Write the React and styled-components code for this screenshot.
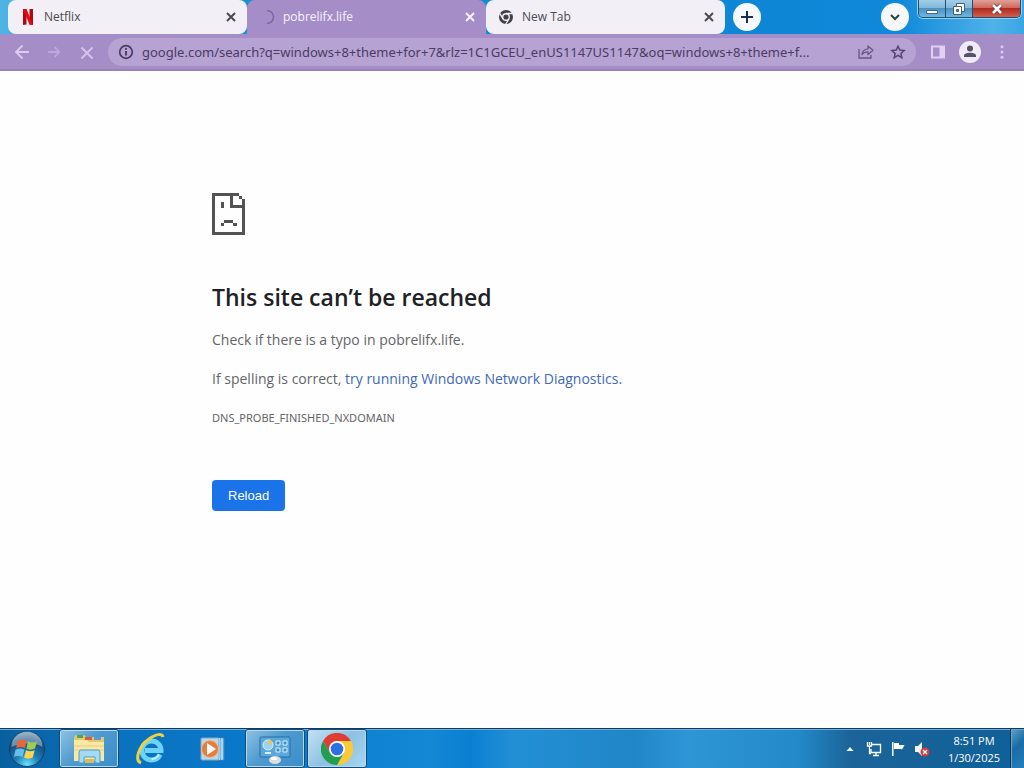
import React from "react";
import styled, { createGlobalStyle } from "styled-components";

const GlobalStyle = createGlobalStyle`
  * { box-sizing: border-box; }
  body { margin: 0; background: #fefefe; font-family: "Open Sans", "Noto Sans", sans-serif; }
  button { font-family: inherit; border: 0; padding: 0; background: none; cursor: pointer; }
  svg { display: block; flex: none; }
`;

const Desktop = styled.div`
  display: flex;
  flex-direction: column;
  min-height: 100vh;
`;

const TabStrip = styled.header`
  display: flex;
  align-items: flex-start;
  height: 34px;
  padding-left: 8px;
  background: linear-gradient(90deg, #4db4e4 0, #1690cf 25%, #0d86d6 75%, #1189da 88%, #4fb3ea 97%, #3ba5e2 100%);
`;

const Tab = styled.div`
  display: flex;
  align-items: center;
  flex: 0 1 239px;
  min-width: 0;
  height: 34px;
  padding: 0 8px 0 12px;
  border-radius: ${(p) => (p.$active ? "8px 8px 0 0" : "8px")};
  background: ${(p) => (p.$active ? "#a58dc7" : "#f2f0f6")};
  color: ${(p) => (p.$active ? "#f8f2ff" : "#4b4a52")};
`;

const TabTitle = styled.span`
  flex: 1;
  min-width: 0;
  margin-left: 8px;
  overflow: hidden;
  white-space: nowrap;
  font-size: 12px;
  line-height: 16px;
`;

const IconButton = styled.button`
  display: grid;
  place-items: center;
  flex: none;
  width: ${(p) => p.$size || 16}px;
  height: ${(p) => p.$size || 16}px;
  border-radius: 50%;
  color: ${(p) => p.$color || "inherit"};
  background: ${(p) => p.$fill || "transparent"};
`;

const StripActions = styled.div`
  display: flex;
  flex: 1;
  justify-content: space-between;
  padding: 3px 9px 0 8px;
`;

const WindowControls = styled.div`
  display: flex;
  flex: none;
  height: 18px;
  margin-right: 3px;
  border: 1px solid #24506f;
  border-top: 0;
  border-radius: 0 0 5px 5px;
  overflow: hidden;
  box-shadow: 0 0 0 1px #8fd0f3;
`;

const WindowButton = styled.button`
  display: grid;
  place-items: center;
  width: ${(p) => (p.$close ? 47 : 27)}px;
  border-right: ${(p) => (p.$close ? "0" : "1px solid #24506f")};
  background: ${(p) =>
    p.$close
      ? "linear-gradient(#e0a098 0, #cf6a5c 45%, #b02b20 50%, #d2604c 100%)"
      : "linear-gradient(#a4cde6 0, #83b9dc 45%, #4b92c1 50%, #6db8e2 100%)"};
`;

const Toolbar = styled.nav`
  display: flex;
  align-items: center;
  height: 37px;
  padding: 0 12px;
  background: #a58dc7;
  border-bottom: 2px solid #9a82b8;
`;

const NavGroup = styled.div`
  display: flex;
  gap: 12px;
  padding-right: 12px;
`;

const AddressBar = styled.div`
  display: flex;
  align-items: center;
  flex: 1;
  min-width: 0;
  height: 28px;
  padding: 0 8px;
  border-radius: 14px;
  background: #b7a2d4;
  color: #4a3c62;
`;

const AddressInput = styled.input`
  flex: 1;
  min-width: 0;
  margin: 0 8px 0 6px;
  padding: 0;
  border: 0;
  outline: 0;
  background: none;
  color: #4a3c62;
  font: 13px/20px "Noto Sans", "Open Sans", sans-serif;
  text-overflow: ellipsis;
`;

const AddressActions = styled.div`
  display: flex;
  gap: 12px;
`;

const ToolbarActions = styled.div`
  display: flex;
  align-items: center;
  gap: 11px;
  padding-left: 12px;
`;

const Page = styled.main`
  flex: 1;
  padding: 122px 24px 40px;
`;

const ErrorPanel = styled.section`
  max-width: 600px;
  margin: 0 auto;
  color: #646569;
  font-size: 14px;
  line-height: 20px;
`;

const ErrorTitle = styled.h1`
  margin: 46px 0 17px;
  color: #202124;
  font-size: 23px;
  font-weight: 600;
  line-height: 32px;
`;

const ErrorText = styled.p`
  margin: 0 0 19px;
`;

const ErrorLink = styled.a`
  color: #4269b4;
  text-decoration: none;
`;

const ErrorCode = styled.p`
  margin: 0 0 52px;
  font-family: "Noto Sans", "Open Sans", sans-serif;
  font-size: 11px;
`;

const ReloadButton = styled.button`
  display: block;
  height: 31px;
  padding: 0 16px;
  border-radius: 4px;
  background: #1a73e8;
  color: #fff;
  font-family: "Liberation Sans", sans-serif;
  font-size: 13px;
  font-weight: 500;
`;

const Taskbar = styled.footer`
  display: flex;
  align-items: stretch;
  height: 40px;
  border-top: 1px solid #123a5c;
  box-shadow: inset 0 1px 0 #71b0dd;
  background: linear-gradient(90deg, #09609f 0, #0a72be 12%, #0a7cd0 30%, #1488d4 42%, #0a7fd2 46%, #228fd4 50%, #2186c8 62%, #2f96d6 67%, #2389c8 78%, #1b6499 83%, #0f6099 100%);
`;

const StartButton = styled.button`
  display: grid;
  place-items: center;
  width: 54px;
`;

const TaskList = styled.div`
  display: flex;
  flex: 1;
  gap: 2px;
  padding-left: 5px;
`;

const taskFill = {
  open: "linear-gradient(135deg, #8fc2e3, #4f9acf 45%, #3a8dca)",
  front: "linear-gradient(135deg, #c4e1f1, #8dc1e2 50%, #a5d6f1)",
  none: "none",
};

const TaskButton = styled.button`
  display: grid;
  place-items: center;
  width: 60px;
  border: 1px solid ${(p) => (p.$state === "none" ? "transparent" : "#154b79")};
  border-radius: 3px;
  background: ${(p) => taskFill[p.$state]};
  box-shadow: ${(p) => (p.$state === "none" ? "none" : "inset 0 0 0 1px #b4daf0")};
`;

const Tray = styled.div`
  display: flex;
  align-items: center;
  gap: 8px;
`;

const Clock = styled.time`
  width: 72px;
  color: #fff;
  font-size: 11px;
  line-height: 17px;
  text-align: center;
`;

const ShowDesktop = styled.button`
  width: 14px;
  border-left: 1px solid #0d3656;
  background: linear-gradient(135deg, #5fa3cc, #1b6aa5 45%, #2480bd);
  box-shadow: inset 1px 1px 0 #6aa3c6;
`;

const Cross = ({ size = 16, width = 2 }) => (
  <svg width={size} height={size} viewBox="0 0 16 16" stroke="currentColor" strokeWidth={width}>
    <path d="M4 4l8 8M12 4l-8 8" />
  </svg>
);

const NetflixIcon = () => (
  <svg width="16" height="16" viewBox="0 0 16 16">
    <path fill="#b20710" d="M3 0h3.5v15.5L3 16zM9.500 0H13v16l-3.500-.5z" />
    <path fill="#e50914" d="M3 0h3.500L13 16l-3.500-.5z" />
  </svg>
);

const Spinner = () => (
  <svg width="16" height="16" viewBox="0 0 16 16" fill="none" stroke="#7f68a8" strokeWidth="1.600">
    <path d="M8 1.500a6.500 6.500 0 0 1 0 13" />
  </svg>
);

const ChromeGlyph = () => (
  <svg width="16" height="16" viewBox="0 0 16 16">
    <circle cx="8" cy="8" r="7" fill="#414046" />
    <circle cx="8" cy="8" r="3.300" fill="#414046" stroke="#f2f0f6" strokeWidth="1.400" />
    <path d="M8 4.500h6.300M5 9.800L1.800 4.400M11 9.800L7.800 15" stroke="#f2f0f6" strokeWidth="1.300" />
  </svg>
);

const BackIcon = () => (
  <svg width="20" height="20" viewBox="0 0 20 20" fill="none" stroke="#dccbf0" strokeWidth="1.800">
    <path d="M17 10H4M10.500 3.500L4 10l6.500 6.500" />
  </svg>
);

const ForwardIcon = () => (
  <svg width="20" height="20" viewBox="0 0 20 20" fill="none" stroke="#bda8dc" strokeWidth="1.800">
    <path d="M4 10h11M10.500 5l5 5-5 5" />
  </svg>
);

const InfoIcon = () => (
  <svg width="20" height="20" viewBox="0 0 20 20" fill="none" stroke="currentColor" strokeWidth="1.700">
    <circle cx="10" cy="10" r="6.300" />
    <path d="M10 9v4.500M10 6v1.700" strokeWidth="1.900" />
  </svg>
);

const ShareIcon = () => (
  <svg width="20" height="20" viewBox="0 0 20 20" fill="none" stroke="#695681" strokeWidth="1.300">
    <path d="M3 7v9h12v-3" />
    <path d="M12 4l5 4.300-5 4.300v-2.800c-2.700 0-4.600.7-6 2.700.4-3.300 2.400-5.300 6-5.700z" strokeLinejoin="round" />
  </svg>
);

const StarIcon = () => (
  <svg width="20" height="20" viewBox="0 0 20 20" fill="none" stroke="#574570" strokeWidth="1.500">
    <path d="M10 4.200l1.800 3.900 4.300.4-3.200 2.900.9 4.200-3.800-2.300-3.800 2.300.9-4.200-3.200-2.900 4.300-.4z" />
  </svg>
);

const SidePanelIcon = () => (
  <svg width="16" height="16" viewBox="0 0 16 16">
    <path fill="none" stroke="#e0d0f2" strokeWidth="2" d="M2 2.500h12v11H2z" />
    <path fill="#e0d0f2" d="M9.500 2H15v12H9.500z" />
  </svg>
);

const ProfileIcon = () => (
  <svg width="22" height="22" viewBox="0 0 22 22">
    <circle cx="11" cy="11" r="11" fill="#f1eaf7" />
    <circle cx="11" cy="7.500" r="3" fill="#575365" />
    <path d="M5 16v-1.500C5 12.500 8.500 11.700 11 11.700s6 .8 6 2.800V16z" fill="#575365" />
  </svg>
);

const MenuIcon = () => (
  <svg width="20" height="20" viewBox="0 0 20 20" fill="#dccbf0">
    <circle cx="10" cy="4.800" r="1.500" />
    <circle cx="10" cy="10" r="1.500" />
    <circle cx="10" cy="15.200" r="1.500" />
  </svg>
);

const SadPageIcon = () => (
  <svg width="33" height="42" viewBox="0 0 33 42" fill="#535353" shapeRendering="crispEdges">
    <path d="M0 0h27v3H3v36h27V15H18V3h3v9h9V6h3v36H0z" />
    <path d="M27 3h3v3h-3zM9 9h3v6H9zM12 27h9v3h-9zM9 30h3v3H9zM21 30h4v3h-4z" />
  </svg>
);

const StartOrb = () => (
  <svg width="38" height="38" viewBox="0 0 38 38">
    <defs>
      <radialGradient id="orb" cx="50%" cy="95%" r="95%">
        <stop offset="0" stopColor="#6fe4ff" />
        <stop offset=".35" stopColor="#1e80b7" />
        <stop offset=".75" stopColor="#174a7a" />
        <stop offset="1" stopColor="#7794ad" />
      </radialGradient>
    </defs>
    <circle cx="19" cy="19" r="17.500" fill="url(#orb)" stroke="#123f69" />
    <path d="M3.500 17a15.500 15.500 0 0 1 31 0c-8-5-23-4-31 0z" fill="#d0e4ee" opacity=".45" />
    <path d="M10 11c3-2 6-1.500 8.500 0L17 18c-3-1.500-6-1.500-9 0z" fill="#ee6535" />
    <path d="M20 11.500c3 1.500 6 1.500 9-.5l-2 7.500c-3 1.500-6 1.500-8.500 0z" fill="#9fce4e" />
    <path d="M7.500 19.700c3-1.500 6-1.500 9 0l-2 7.300c-3-1.500-6-1.500-8.500 0z" fill="#65bfec" />
    <path d="M18 20.200c3 1.500 6 1.500 8.700 0l-2 7.300c-3 1.500-6 1.500-8.700 0z" fill="#ffd34c" />
  </svg>
);

const ExplorerIcon = () => (
  <svg width="34" height="34" viewBox="0 0 34 34">
    <path d="M2 5l2-2h8l2 2h18v24H2z" fill="#e4c66b" />
    <path d="M5 3h6v3H5z" fill="#48a853" />
    <path d="M13 5h7v3h-7z" fill="#d65c40" />
    <path d="M22 5h7v3h-7z" fill="#5c9bd0" />
    <path d="M2 8h13l2 2h15v19H2z" fill="#f9e9a4" />
    <path d="M2 14h30M2 18h30" stroke="#e7cd7d" />
    <path d="M7 31V20q0-2 2-2h17q2 0 2 2v11h-5v-6H12v6z" fill="#a4daf2" stroke="#4c9fc9" />
    <path d="M13 27h9v4h-9z" fill="#dfb95d" />
  </svg>
);

const ExplorerE = () => (
  <svg width="34" height="34" viewBox="0 0 34 34" fill="none">
    <path d="M26 22.500c-1.500 3.500-4.500 5.500-8.500 5.500-5.500 0-9.500-4-9.500-9.500S12 9 17.500 9 27 13 27 18.500H11" stroke="#6fd3f8" strokeWidth="5" />
    <path d="M25 22.500c-1.500 3-4 4.500-7.500 4.500" stroke="#c0f0ff" strokeWidth="2" />
    <path d="M7 31C0 28 5 14 15 7c7-5 13-6 14-2" stroke="#efd044" strokeWidth="3" />
  </svg>
);

const MediaIcon = () => (
  <svg width="30" height="30" viewBox="0 0 30 30">
    <path d="M19 4h7v22h-7z" fill="#78bce5" stroke="#3486c2" />
    <path d="M21.500 4v22M24 4v22" stroke="#d7effb" />
    <rect x="3" y="4" width="18" height="22" rx="1" fill="#b6d8ec" stroke="#7da8c5" />
    <circle cx="12" cy="15" r="8.500" fill="#e57e3d" stroke="#f9b585" />
    <path d="M9 9l9 6-9 6z" fill="#fff" />
  </svg>
);

const ControlIcon = () => (
  <svg width="32" height="32" viewBox="0 0 32 32">
    <rect x="1" y="4" width="30" height="20" rx="1" fill="#5aa8dc" stroke="#276d9f" />
    <circle cx="9" cy="12" r="5" fill="#9fd2ee" stroke="#d9eff9" />
    <path d="M9 12l1-6a5 5 0 0 1 3 5z" fill="#e9c45a" />
    <path d="M17 8h4v4h-4zM24 8h4v4h-4zM17 15h4v4h-4zM24 15h4v4h-4z" fill="#448ebd" stroke="#d8f1fd" />
    <path d="M6 20h6" stroke="#d8f1fd" strokeWidth="2" />
    <ellipse cx="16" cy="27" rx="6" ry="4" fill="#dedfdd" />
    <ellipse cx="15" cy="25.500" rx="3" ry="1.500" fill="#fff" />
  </svg>
);

const ChromeIcon = () => (
  <svg width="32" height="32" viewBox="0 0 32 32">
    <path d="M2.100 8A16 16 0 0 1 29.900 8H16L9 20z" fill="#df3d31" />
    <path d="M29.900 8A16 16 0 0 1 16 32l7-12L16 8z" fill="#fcc934" />
    <path d="M16 32A16 16 0 0 1 2.100 8L9.100 20 16 24l6.900-4z" fill="#249d50" />
    <circle cx="16" cy="16" r="8" fill="#fff" />
    <circle cx="16" cy="16" r="6.300" fill="#2a72e4" />
  </svg>
);

const NetworkIcon = () => (
  <svg width="16" height="16" viewBox="0 0 16 16" fill="none" stroke="#fff">
    <path d="M6 3.500h8.500v8H5V8M7 14.500h6M10 12v2M1.500 1v4h4V1M3.500 1v3M3.500 5v7.500H5" strokeWidth="1.300" />
  </svg>
);

const FlagIcon = () => (
  <svg width="16" height="16" viewBox="0 0 16 16" fill="#fff">
    <path d="M2 1h1.500v14H2zM4 2h5v2h5.500L13.500 6l-1.500 2.500L10 7.500V8H4z" />
  </svg>
);

const MutedIcon = () => (
  <svg width="16" height="16" viewBox="0 0 16 16">
    <path d="M1 5h3l4-4v14l-4-4H1z" fill="#eef5f8" />
    <circle cx="11" cy="11" r="4.500" fill="#d63b37" />
    <path d="M9 9l4 4M13 9l-4 4" stroke="#fff" strokeWidth="1.300" />
  </svg>
);

const tabs = [
  { title: "Netflix", Icon: NetflixIcon },
  { title: "pobrelifx.life", Icon: Spinner, active: true },
  { title: "New Tab", Icon: ChromeGlyph },
];

const tasks = [
  { label: "Windows Explorer", Icon: ExplorerIcon, state: "open" },
  { label: "Internet Explorer", Icon: ExplorerE, state: "none" },
  { label: "Media Player", Icon: MediaIcon, state: "none" },
  { label: "Control Panel", Icon: ControlIcon, state: "open" },
  { label: "Google Chrome", Icon: ChromeIcon, state: "front" },
];

export default function App() {
  return (
    <Desktop>
      <GlobalStyle />
      <TabStrip>
        {tabs.map(({ title, Icon, active }) => (
          <Tab key={title} $active={active}>
            <Icon />
            <TabTitle>{title}</TabTitle>
            <IconButton aria-label={`Close ${title}`}><Cross /></IconButton>
          </Tab>
        ))}
        <StripActions>
          <IconButton $size={28} $fill="#f5f8fc" $color="#1c2d48" aria-label="New tab">
            <svg width="16" height="16" viewBox="0 0 16 16" stroke="currentColor" strokeWidth="2"><path d="M8 2v12M2 8h12" /></svg>
          </IconButton>
          <IconButton $size={28} $fill="#f6f7f9" $color="#24473f" aria-label="Search tabs">
            <svg width="16" height="16" viewBox="0 0 16 16" fill="none" stroke="currentColor" strokeWidth="2"><path d="M4 6l4 4 4-4" /></svg>
          </IconButton>
        </StripActions>
        <WindowControls>
          <WindowButton aria-label="Minimize">
            <svg width="14" height="14" viewBox="0 0 14 14"><path d="M1.500 8.500h11v3h-11z" fill="#fff" stroke="#4c6880" /></svg>
          </WindowButton>
          <WindowButton aria-label="Restore">
            <svg width="14" height="14" viewBox="0 0 14 14" fill="#fff" stroke="#475f76">
              <path d="M4.500 1.500h8v8h-8z" /><path d="M1.500 4.500h8v8h-8z" /><path d="M4.500 7.500h2v2h-2z" fill="#548fb6" />
            </svg>
          </WindowButton>
          <WindowButton $close aria-label="Close window">
            <svg width="14" height="14" viewBox="0 0 14 14">
              <path d="M3 3l8 8M11 3l-8 8" stroke="#6f3839" strokeWidth="4.500" />
              <path d="M3 3l8 8M11 3l-8 8" stroke="#fff" strokeWidth="2.600" />
            </svg>
          </WindowButton>
        </WindowControls>
      </TabStrip>
      <Toolbar aria-label="Browser toolbar">
        <NavGroup>
          <IconButton $size={20} aria-label="Back"><BackIcon /></IconButton>
          <IconButton $size={20} aria-label="Forward"><ForwardIcon /></IconButton>
          <IconButton $size={20} $color="#d6c5ec" aria-label="Stop"><Cross size={22} width={1.3} /></IconButton>
        </NavGroup>
        <AddressBar>
          <InfoIcon />
          <AddressInput
            aria-label="Address"
            defaultValue="google.com/search?q=windows+8+theme+for+7&rlz=1C1GCEU_enUS1147US1147&oq=windows+8+theme+f..."
          />
          <AddressActions>
            <IconButton $size={20} aria-label="Share"><ShareIcon /></IconButton>
            <IconButton $size={20} aria-label="Bookmark"><StarIcon /></IconButton>
          </AddressActions>
        </AddressBar>
        <ToolbarActions>
          <IconButton $size={20} aria-label="Side panel"><SidePanelIcon /></IconButton>
          <IconButton $size={22} aria-label="Profile"><ProfileIcon /></IconButton>
          <IconButton $size={20} aria-label="Menu"><MenuIcon /></IconButton>
        </ToolbarActions>
      </Toolbar>
      <Page>
        <ErrorPanel>
          <SadPageIcon />
          <ErrorTitle>This site can’t be reached</ErrorTitle>
          <ErrorText>Check if there is a typo in pobrelifx.life.</ErrorText>
          <ErrorText>
            If spelling is correct, <ErrorLink href="#diagnostics">try running Windows Network Diagnostics.</ErrorLink>
          </ErrorText>
          <ErrorCode>DNS_PROBE_FINISHED_NXDOMAIN</ErrorCode>
          <ReloadButton>Reload</ReloadButton>
        </ErrorPanel>
      </Page>
      <Taskbar>
        <StartButton aria-label="Start"><StartOrb /></StartButton>
        <TaskList>
          {tasks.map(({ label, Icon, state }) => (
            <TaskButton key={label} $state={state} aria-label={label}><Icon /></TaskButton>
          ))}
        </TaskList>
        <Tray>
          <IconButton aria-label="Show hidden icons">
            <svg width="16" height="16" viewBox="0 0 16 16"><path d="M4.500 10L8 6l3.500 4z" fill="#eef6fa" /></svg>
          </IconButton>
          <IconButton aria-label="Network"><NetworkIcon /></IconButton>
          <IconButton aria-label="Action Center"><FlagIcon /></IconButton>
          <IconButton aria-label="Volume muted"><MutedIcon /></IconButton>
          <Clock dateTime="2025-01-30T20:51">8:51 PM<br />1/30/2025</Clock>
        </Tray>
        <ShowDesktop aria-label="Show desktop" />
      </Taskbar>
    </Desktop>
  );
}
